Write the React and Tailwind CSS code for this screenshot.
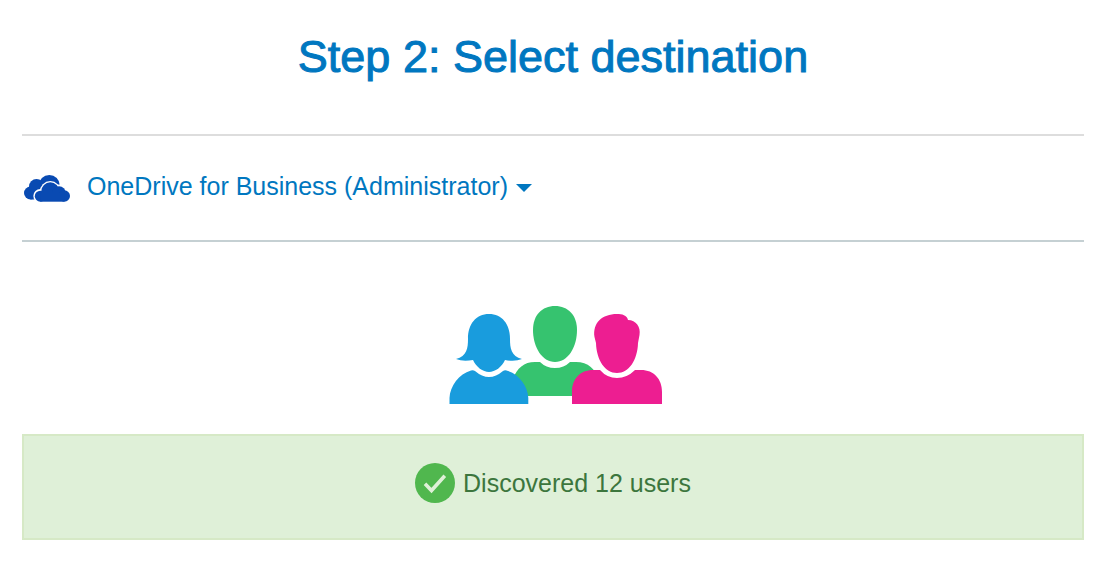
function CloudIcon() {
  return (
    <svg viewBox="0 0 46 28" className="h-7 w-[46px] shrink-0" aria-hidden="true">
      <g fill="#094ab2">
        <circle cx="6.500" cy="18" r="6.500" />
        <circle cx="12.500" cy="11.500" r="7.500" />
        <circle cx="25.300" cy="10.500" r="10.500" />
        <path d="M6.500 15H24V24.500H6.500Z" />
      </g>
      <g fill="#fff">
        <circle cx="16.300" cy="21" r="7" />
        <circle cx="26.300" cy="16.600" r="10.500" />
        <circle cx="35.500" cy="17.500" r="8" />
      </g>
      <g fill="#094ab2">
        <circle cx="16.300" cy="21.200" r="5.500" />
        <circle cx="26.300" cy="16.300" r="9" />
        <circle cx="35" cy="18" r="6.800" />
        <circle cx="40.300" cy="21" r="5.700" />
        <path d="M16.300 18H40.300V26.700H16.300Z" />
      </g>
    </svg>
  );
}

function UsersIcon() {
  return (
    <svg viewBox="0 0 214 98" className="h-[98px] w-[214px]" role="img" aria-label="Users">
      <g fill="#36c36f">
        <path d="M106 0C119 0 128 9 128 24C128 41 119 56 106 56C93 56 84 41 84 24C84 9 93 0 106 0Z" />
        <path d="M64 90V73C68 62 75 56 86 56H91Q97 62 106 62Q115 62 121 56H127C139 56 147 63 149 74V90Z" />
      </g>
      <g fill="#199cdd">
        <path d="M40 8C53 8 61 18 61 33C61 42 62 50 73 53Q66 56 56 54C53 61 46 66 40 66C34 66 27 61 24 54Q14 56 7 53C18 50 19 42 19 33C19 18 27 8 40 8Z" />
        <path d="M0.500 98V92C1 80 10 68 22 64.500Q24 63.600 26 65Q33 71 40 71Q47 71 54 65Q56 63.500 59 65C71 69 79 81 79.300 92V98Z" />
      </g>
      <g fill="#ed1e91">
        <path d="M168 8C173 8 178 9 179 14C187 14 192 21 190.500 29L189 37C188.500 54 180 67 168 67C156 67 147.500 54 147 37L145.500 31C143.500 17 153 8 168 8Z" />
        <path d="M123 98V86C123 73 131 64 144 64H151Q158 72 168 72Q178 72 186 64H192C205 64 213 73 213 86V98Z" />
      </g>
    </svg>
  );
}

function CheckIcon() {
  return (
    <svg viewBox="0 0 40 40" className="size-10 shrink-0" aria-hidden="true">
      <circle cx="20" cy="20" r="20" fill="#50b74e" />
      <path d="M10 20.800L16.500 27.500L29.800 12.800" fill="none" stroke="#dff0d8" strokeWidth="3.600" />
    </svg>
  );
}

export default function App() {
  return (
    <main className="px-[22px] pt-8 pb-6 font-['Liberation_Sans',Arial,sans-serif]">
      <h1 className="text-center text-[45px] leading-[50px] text-[#0077c0] [-webkit-text-stroke:1px_#0077c0]">
        Step 2: Select destination
      </h1>

      <section className="mt-[52px] border-t-2 border-b-2 border-t-[#dddddd] border-b-[#c5d0d3] px-0.5 pt-8 pb-9">
        <button
          type="button"
          aria-haspopup="menu"
          className="flex h-9 items-center gap-[17px] text-[25px] leading-9 text-[#0077c0]"
        >
          <span className="pt-1.5">
            <CloudIcon />
          </span>
          <span className="flex items-center gap-2">
            OneDrive for Business (Administrator)
            <svg viewBox="0 0 16 8" className="mt-1 h-2 w-4" aria-hidden="true">
              <path d="M0 0H16L8 8Z" fill="#0077c0" />
            </svg>
          </span>
        </button>
      </section>

      <div className="mt-16 flex justify-center pl-1.5">
        <UsersIcon />
      </div>

      <div
        role="status"
        className="mt-[30px] flex items-center justify-center gap-2 border-2 border-[#d6e9c6] bg-[#dff0d8] pt-[27px] pb-[35px] text-[25px] leading-10 text-[#3c763d]"
      >
        <CheckIcon />
        <span>Discovered 12 users</span>
      </div>
    </main>
  );
}
